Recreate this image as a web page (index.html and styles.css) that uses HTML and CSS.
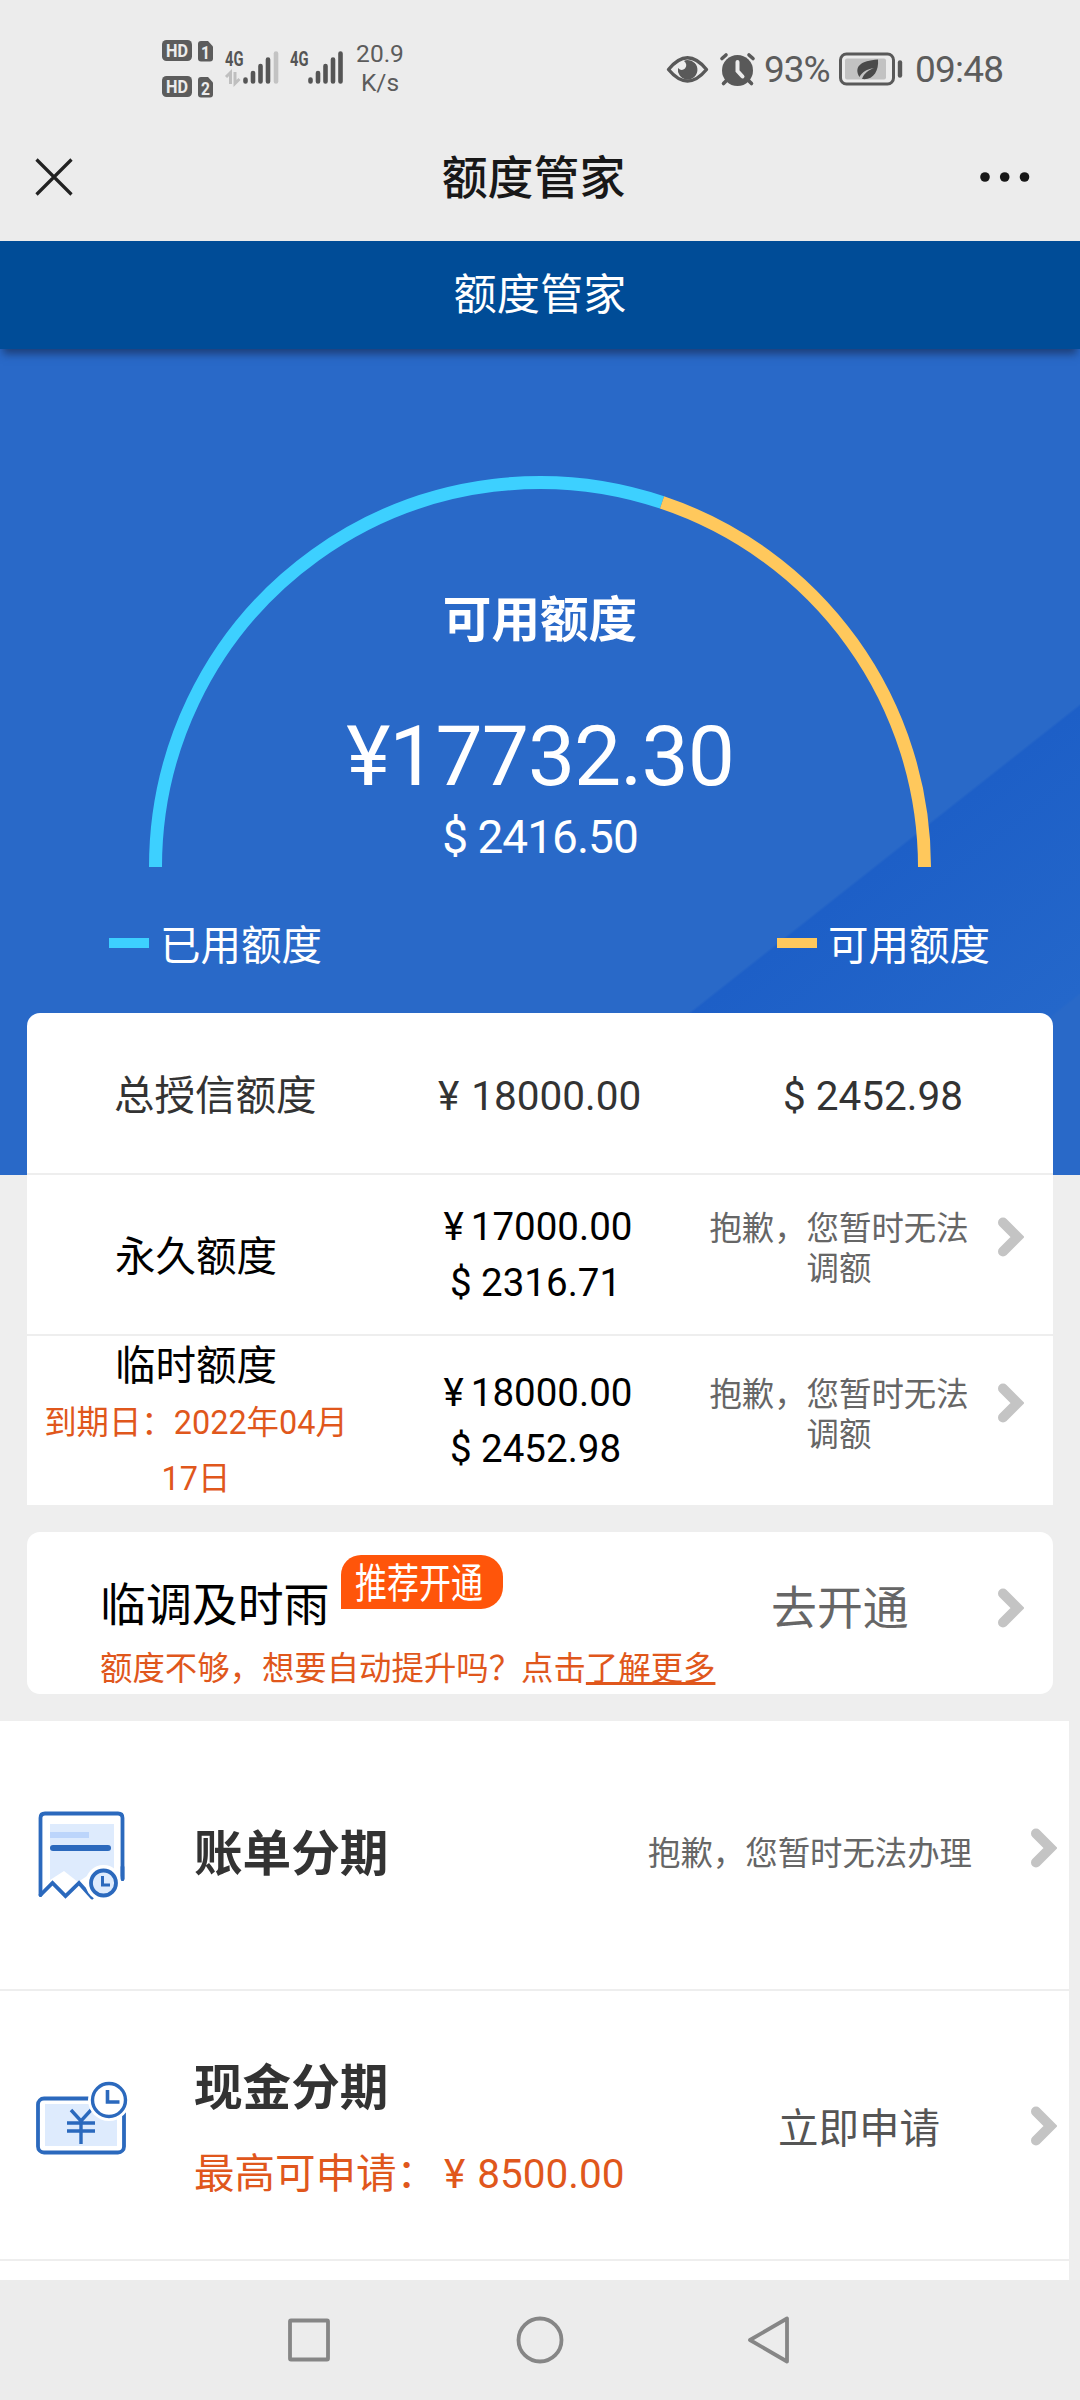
FILE: index.html
```html
<!DOCTYPE html>
<html lang="zh-CN">
<head>
<meta charset="utf-8">
<title>额度管家</title>
<link rel="stylesheet" href="styles.css">
</head>
<body>
<svg class="defs" width="0" height="0">
  <symbol id="chev" viewBox="0 0 26 40"><path d="M5 5.500L19.500 20L5 34.500" fill="none" stroke="#c4c4c4" stroke-width="10" stroke-linecap="round" stroke-linejoin="miter"/></symbol>
</svg>
<div class="status">
  <div class="status-left">
    <svg class="sig" width="183" height="60" viewBox="161 39 183 60">
      <g fill="#5c5c5c">
        <rect x="162" y="40" width="30" height="21" rx="4.500"/>
        <rect x="162" y="76" width="30" height="21" rx="4.500"/>
        <path d="M201 41h7l5 5.500v12q0 3-3 3h-9q-3 0-3-3v-14.500q0-3 3-3z"/>
        <path d="M201 77h7l5 5.500v12q0 3-3 3h-9q-3 0-3-3v-14.500q0-3 3-3z"/>
      </g>
      <g class="tag" fill="#ececec">
        <text x="166" y="57" textLength="22" lengthAdjust="spacingAndGlyphs">HD</text>
        <text x="166" y="93" textLength="22" lengthAdjust="spacingAndGlyphs">HD</text>
        <text x="201" y="58.500" textLength="9" lengthAdjust="spacingAndGlyphs">1</text>
        <text x="201" y="94.500" textLength="9" lengthAdjust="spacingAndGlyphs">2</text>
      </g>
      <g class="net" fill="#555">
        <text x="225" y="66" textLength="18.500" lengthAdjust="spacingAndGlyphs">4G</text>
        <text x="290" y="66" textLength="18.500" lengthAdjust="spacingAndGlyphs">4G</text>
      </g>
      <path d="M226 77l4.500-4.500v11.500M235 72v11.500l4.500-4.500" fill="none" stroke="#bfbfbf" stroke-width="3"/>
      <g fill="none" stroke="#555" stroke-width="4.600" stroke-linecap="round">
        <path d="M245.500 79.500v2M253 73v8.500M260.500 66v15.500M268 59.500v22"/>
        <path d="M276 53.500v28" stroke="#c3c3c3"/>
        <path d="M310.500 79.500v2M318 73v8.500M325.500 66v15.500M333 59.500v22M340.500 53.500v28"/>
      </g>
    </svg>
    <div class="speed"><span>20.9</span><span>K/s</span></div>
  </div>
  <div class="status-right">
    <svg width="90" height="36" viewBox="666 50 90 36">
      <path d="M668.500 68.500q19-23.500 38 0q-19 23-38 0z" fill="none" stroke="#595959" stroke-width="3.400" stroke-linejoin="round"/>
      <path d="M687.500 59a9.800 9.800 0 1 1-9.500 8q3.500 3.500 7 .5q3-4-1-7.500q1.500-1 3.500-1z" fill="#595959"/>
      <g fill="none" stroke="#595959" stroke-width="3.600" stroke-linecap="round">
        <path d="M722 57.500l4-3.500M753 57.500l-4-3.500M727 79l-3.500 3.500M748 79l3.500 3.500"/>
      </g>
      <circle cx="737.500" cy="69.500" r="15.500" fill="#595959"/>
      <path d="M737.500 61v9l5 5.500" fill="none" stroke="#ececec" stroke-width="4" stroke-linecap="round"/>
    </svg>
    <span class="pct">93%</span>
    <svg width="64" height="34" viewBox="839 51.500 64 34">
      <rect x="840.500" y="53.500" width="53" height="30" rx="6" fill="none" stroke="#595959" stroke-width="3"/>
      <rect x="845" y="58" width="41" height="21" rx="2" fill="#c2c2c2"/>
      <path d="M900 62v13" stroke="#595959" stroke-width="4.400" stroke-linecap="round"/>
      <path d="M878 59c1 12-5 21-16 19.500c2-6 7-9 12-11c-7 1-12 4-14.500 9c-6-10 1-16.500 18.500-17.500z" fill="#4a4a4a"/>
    </svg>
    <span class="time">09:48</span>
  </div>
</div>
<header class="nav">
  <svg width="38" height="38" viewBox="0 0 38 38"><path d="M1.500 1.500l35 35M36.500 1.500l-35 35" stroke="#222" stroke-width="3.200" fill="none"/></svg>
  <h1>额度管家</h1>
  <svg width="50" height="12" viewBox="0 0 50 12"><g fill="#181818"><circle cx="5" cy="6" r="4.800"/><circle cx="24.700" cy="6" r="4.800"/><circle cx="44.500" cy="6" r="4.800"/></g></svg>
</header>
<div class="bar">额度管家</div>
<section class="hero">
  <div class="gauge">
    <svg class="arc" width="784" height="393" viewBox="148 474 784 393">
      <path d="M155.500 867A384.500 384.500 0 0 1 662 502.400" fill="none" stroke="#3dd0ff" stroke-width="13"/>
      <path d="M662 502.400A384.500 384.500 0 0 1 924.500 867" fill="none" stroke="#ffc85c" stroke-width="13"/>
    </svg>
    <div class="gauge-text">
      <div class="g-title">可用额度</div>
      <div class="g-main">¥17732.30</div>
      <div class="g-sub">$ 2416.50</div>
    </div>
  </div>
  <div class="legend">
    <span class="leg"><i class="used"></i>已用额度</span>
    <span class="leg"><i class="free"></i>可用额度</span>
  </div>
</section>
<section class="card limits">
  <div class="row total">
    <div class="name">总授信额度</div>
    <div class="cny">¥<b></b>18000.00</div>
    <div class="usd">$ 2452.98</div>
  </div>
  <div class="row">
    <div class="name">永久额度</div>
    <div class="amt"><span class="y">¥<b></b>17000.00</span><span>$ 2316.71</span></div>
    <div class="msg">抱歉，您暂时无法调额</div>
    <svg class="chev" width="26" height="40"><use href="#chev"/></svg>
  </div>
  <div class="row temp">
    <div class="name">临时额度<p class="due">到期日：2022年04月17日</p></div>
    <div class="amt"><span class="y">¥<b></b>18000.00</span><span>$ 2452.98</span></div>
    <div class="msg">抱歉，您暂时无法调额</div>
    <svg class="chev" width="26" height="40"><use href="#chev"/></svg>
  </div>
</section>
<section class="card rain">
  <div class="rain-main">
    <div class="rain-title">临调及时雨<span class="badge"><span>推荐开通</span></span></div>
    <div class="rain-tip">额度不够，想要自动提升吗？点击<a>了解更多</a></div>
  </div>
  <div class="open">去开通</div>
  <svg class="chev" width="26" height="40"><use href="#chev"/></svg>
</section>
<section class="list">
  <div class="item first">
    <svg class="ico" width="92" height="92" viewBox="36 1808 92 92">
      <path d="M50 1823h64v50h-24l-12 8-14-11-14 9z" fill="#deebfd"/>
      <path d="M40.500 1894v-77q0-4.500 4.500-4.500h73q4.500 0 4.500 4.500v61" fill="none" stroke="#2b69bd" stroke-width="3.800" stroke-linecap="round"/>
      <path d="M40.500 1894l12-12 13 13 13.500-13 13 14.500" fill="none" stroke="#2b69bd" stroke-width="3.800" stroke-linecap="round"/>
      <rect x="50" y="1831" width="39" height="6" fill="#bcd5fb"/>
      <rect x="50" y="1844" width="61" height="6" rx="3" fill="#2b69bd"/>
      <circle cx="103.500" cy="1882" r="18" fill="#fff"/>
      <path d="M122.500 1866v12" fill="none" stroke="#2b69bd" stroke-width="3.800" stroke-linecap="round"/>
      <circle cx="103.500" cy="1882" r="12.500" fill="#deebfd" stroke="#2b69bd" stroke-width="3.800"/>
      <path d="M102.500 1875v9h7.500" fill="none" stroke="#2b69bd" stroke-width="3"/>
    </svg>
    <div class="txt"><h2>账单分期</h2></div>
    <div class="sorry">抱歉，您暂时无法办理</div>
    <svg class="chev" width="26" height="40"><use href="#chev"/></svg>
  </div>
  <div class="item second">
    <svg class="ico" width="92" height="76" viewBox="36 2080 92 76">
      <rect x="38" y="2098.500" width="86" height="54" rx="6" fill="#fff" stroke="#2b69bd" stroke-width="3.800"/>
      <rect x="45" y="2104" width="72" height="42" fill="#deebfd"/>
      <path d="M71 2110l10 11 10-11M67 2123h28M67 2131h28M81 2121v23" fill="none" stroke="#2b69bd" stroke-width="3.400"/>
      <circle cx="109" cy="2100" r="21" fill="#fff"/>
      <circle cx="109" cy="2100" r="16.500" fill="#fff" stroke="#2b69bd" stroke-width="3.400"/>
      <path d="M107.500 2090v12h12" fill="none" stroke="#2b69bd" stroke-width="3.600"/>
    </svg>
    <div class="txt"><h2>现金分期</h2><p>最高可申请：<span>¥<b></b>8500.00</span></p></div>
    <div class="apply">立即申请</div>
    <svg class="chev" width="26" height="40"><use href="#chev"/></svg>
  </div>
</section>
<footer class="sysnav">
  <svg width="504" height="50" viewBox="288 2315 504 50"><g fill="none" stroke="#868686" stroke-width="3.800" stroke-linejoin="round"><rect x="290" y="2320.500" width="38" height="39" rx="1"/><circle cx="540" cy="2340" r="21.500"/><path d="M787 2318.500v43L750 2340z"/></g></svg>
</footer>
</body>
</html>
```
FILE: styles.css
```css
* { box-sizing: border-box; }
body {
  margin: 0;
  width: 1080px;
  height: 2400px;
  overflow: hidden;
  background: #eee;
  font-family: Roboto, "Noto Sans CJK SC", sans-serif;
  font-size: 40.500px;
  color: #000;
}
h1, h2, p { margin: 0; }
.defs { position: absolute; }

.status {
  height: 112px;
  padding: 24px 75px 0 161px;
  background: #ececec;
  display: flex;
  justify-content: space-between;
  color: #5c5c5c;
}
.status-left { display: flex; padding-top: 15px; }
.tag { font-weight: 700; font-size: 18px; }
.net { font-weight: 700; font-size: 21px; }
.speed {
  width: 72px;
  margin-top: -13px;
  padding-top: 14px;
  font-size: 24.500px;
  line-height: 28.500px;
  display: flex;
  flex-direction: column;
  align-items: center;
}
.status-right { display: flex; align-items: center; height: 90px; }
.pct, .time { font-size: 37px; line-height: 44px; padding-top: 2px; }
.pct { margin: 0 8px; width: 67px; letter-spacing: -1px; }
.time { margin-left: 12px; width: 90px; letter-spacing: -.8px; }

.nav {
  height: 129px;
  padding: 0 50px 0 35px;
  background: #ececec;
  display: flex;
  justify-content: space-between;
  align-items: center;
}
.nav h1 { font-size: 45.900px; font-weight: 500; color: #181818; line-height: 60px; margin-left: 14px; padding-top: 3px; }
.bar {
  position: relative;
  height: 108px;
  background: #004c97;
  color: #fff;
  font-size: 43.200px;
  line-height: 109px;
  text-align: center;
  box-shadow: 0 8px 8px -3px rgba(25, 50, 95, .75);
}

.hero {
  height: 826px;
  padding-top: 125px;
  background: linear-gradient(141.700deg, #2969c8 0, #2969c8 71.900%, #1d5fc7 72.100%, #2467ca 89.100%, #2969c8 89.300%);
}
.gauge { display: grid; justify-content: center; height: 393px; }
.arc, .gauge-text { grid-area: 1 / 1; }
.gauge-text { color: #fff; display: flex; flex-direction: column; align-items: center; padding-top: 112px; }
.g-title { font-size: 48.600px; font-weight: 700; line-height: 70px; }
.g-main { font-size: 84px; line-height: 100px; margin-top: 51px; letter-spacing: -1px; }
.g-sub { font-size: 46px; line-height: 56px; margin-top: 2px; letter-spacing: -1px; }
.legend { display: flex; justify-content: space-between; padding: 49px 90px 0 109px; color: #fff; line-height: 60px; }
.leg { display: flex; align-items: center; gap: 11px; }
.leg i { width: 40px; height: 10px; margin-bottom: 6px; }
.used { background: #3dd0ff; }
.free { background: #ffc85c; }

.card { margin: 0 27px; background: #fff; }
.limits { position: relative; margin-top: -162px; height: 492px; border-radius: 13px 13px 0 0; }
.row { display: flex; height: 161px; align-items: flex-start; border-bottom: 2px solid #eee; padding-top: 24px; }
.row .name { flex: none; width: 338px; text-align: center; line-height: 56px; padding-top: 30px; }
.cny b, .amt b, .txt b { display: inline-block; width: 12px; }
.amt { width: 320px; flex: none; display: flex; flex-direction: column; align-items: center; font-size: 38.500px; line-height: 56px; padding-left: 21px; }
.amt b { width: 7px; }
.amt .y { margin-left: 5px; }
.msg { flex: none; width: 270px; margin-left: 19px; padding-top: 10px; font-size: 32.400px; line-height: 40px; text-align: center; color: #666; }
.row .chev { margin: 18px 0 0 24px; }
.row.total { height: 162px; padding: 5px 0 0; align-items: center; color: #333; line-height: 60px; }
.row.total .name { width: 411px; padding: 0 0 0 87px; text-align: left; }
.total .cny { width: 345px; }
.row.temp { height: 169px; padding-top: 29px; border: 0; }
.temp .name { padding: 0 12px; margin-top: -27px; }
.due { color: #e0571c; font-size: 32.400px; padding-top: 1px; }

.rain { margin-top: 27px; height: 162px; border-radius: 13px; display: flex; align-items: center; }
.rain-main { width: 744px; padding-left: 73px; height: 162px; }
.rain-title { display: flex; align-items: flex-start; height: 114px; padding-top: 23px; font-size: 45.900px; line-height: 101px; }
.badge { width: 162px; height: 54px; margin-left: 12px; background: #ff550a; border-radius: 20px 22px 22px 0; color: #fff; font-size: 41px; line-height: 59px; text-align: center; }
.badge span { display: block; width: 166px; margin-left: -5px; transform: scaleX(.78); }
.rain-tip { font-size: 32.400px; line-height: 47px; color: #e0571c; white-space: nowrap; }
.rain-tip a { text-decoration: underline; }
.open { width: 227px; font-size: 45.900px; line-height: 60px; padding-bottom: 10px; color: #666; }
.rain .chev { margin-bottom: 10px; }

.list { width: 1069px; height: 559px; margin-top: 27px; background: #fff; }
.item { display: flex; align-items: center; height: 270px; border-bottom: 2px solid #eee; padding-left: 36px; }
.ico { flex: none; }
.second .ico { margin-bottom: 14px; }
.txt { width: 453px; padding-left: 66px; flex: none; }
.item h2 { font-size: 48.600px; line-height: 70px; color: #333; }
.second .txt { padding-top: 7px; }
.txt p { font-size: 40.500px; line-height: 60px; color: #e0571c; white-space: nowrap; margin-top: 20px; }
.txt p span { margin-left: 7px; }
.sorry { flex: 1; text-align: right; padding: 0 59px 10px 0; font-size: 32.400px; color: #666; white-space: nowrap; }
.apply { flex: 1; padding-left: 197px; color: #555; white-space: nowrap; }
.item .chev { margin-right: 12px; flex: none; }
.first .chev { margin-bottom: 15px; }
.second .chev { margin-top: 2px; }
.sysnav { height: 120px; background: #ececec; display: flex; justify-content: center; align-items: center; }
```
